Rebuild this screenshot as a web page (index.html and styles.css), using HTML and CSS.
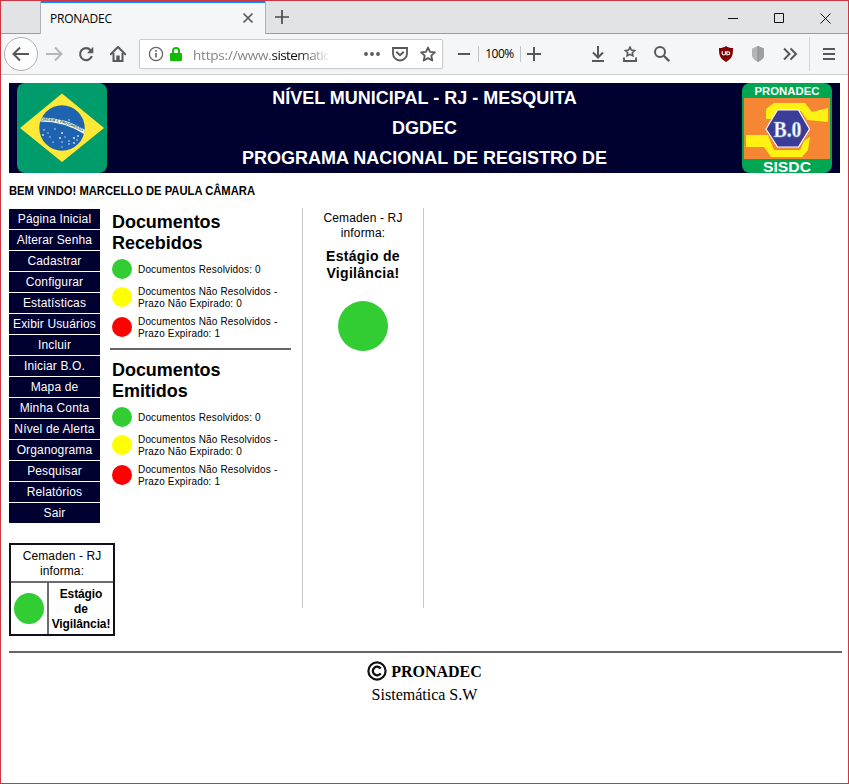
FILE: index.html
```html
<!DOCTYPE html>
<html lang="pt-BR">
<head>
<meta charset="utf-8">
<title>PRONADEC</title>
<link rel="stylesheet" href="styles.css">
</head>
<body>
<div class="window">
  <div class="tabbar">
    <div class="tab"><span class="tab-title">PRONADEC</span>
      <svg class="tab-close" width="12" height="12" viewBox="0 0 12 12"><path d="M1.5 1.5l9 9M10.5 1.5l-9 9" stroke="#58585a" stroke-width="1.7"/></svg>
    </div>
    <svg class="newtab" width="14" height="14" viewBox="0 0 14 14"><path d="M7 0v14M0 7h14" stroke="#4a4a4f" stroke-width="1.7"/></svg>
    <div class="controls">
      <svg width="10" height="11" viewBox="0 0 10 11"><path d="M0 5.5h10" stroke="#111"/></svg>
      <svg width="10" height="10" viewBox="0 0 10 10"><path d="M.5.5h9v9h-9z" fill="none" stroke="#111"/></svg>
      <svg width="11" height="11" viewBox="0 0 11 11"><path d="M.5.5l10 10M10.5.5l-10 10" stroke="#111"/></svg>
    </div>
  </div>
  <div class="toolbar">
    <span class="tool back"><svg width="18" height="16" viewBox="0 0 18 16"><path d="M8 1.5L1.5 8 8 14.5M2 8h15" fill="none" stroke="#58585a" stroke-width="2"/></svg></span>
    <span class="tool"><svg width="18" height="16" viewBox="0 0 18 16"><path d="M10 1.500L16.500 8 10 14.500M16 8H1" fill="none" stroke="#b5b6b8" stroke-width="2"/></svg></span>
    <span class="tool"><svg width="16" height="16" viewBox="0 0 16 16"><path d="M12.600 4.200A6 6 0 1 0 13.800 10" fill="none" stroke="#58585a" stroke-width="2.100"/><path d="M15.300.8v6.400H9z" fill="#58585a"/></svg></span>
    <span class="tool"><svg width="16" height="16" viewBox="0 0 16 16"><path d="M.7 8.200L8 1l7.300 7.200" fill="none" stroke="#58585a" stroke-width="2" stroke-linecap="round" stroke-linejoin="round"/><path d="M3.500 7v8h9V7" fill="none" stroke="#58585a" stroke-width="2"/><path d="M6.300 15v-5.500h3.400V15z" fill="#58585a"/></svg></span>
    <div class="urlbar">
      <svg class="info" width="16" height="16" viewBox="0 0 16 16"><circle cx="8" cy="8" r="6.600" fill="none" stroke="#666" stroke-width="1.300"/><path d="M8 7v4.500M8 4v1.800" stroke="#666" stroke-width="1.700"/></svg>
      <svg class="lock" width="12" height="14" viewBox="0 0 12 14"><path d="M3 7V4a3 3 0 0 1 6 0v3" fill="none" stroke="#12bc00" stroke-width="2"/><rect y="6" width="12" height="8" rx="1" fill="#12bc00"/></svg>
      <span class="url">https://www.<b>sistematic</b></span>
      <svg width="16" height="16" viewBox="0 0 16 16"><g fill="#58585a"><circle cx="2" cy="8" r="1.900"/><circle cx="8" cy="8" r="1.900"/><circle cx="14" cy="8" r="1.900"/></g></svg>
      <svg width="16" height="16" viewBox="0 0 16 16"><path d="M1 2h14v5.500a7 7 0 0 1-14 0z" fill="none" stroke="#58585a" stroke-width="1.800"/><path d="M4.800 6.300L8 9.300l3.200-3" fill="none" stroke="#58585a" stroke-width="1.900" stroke-linecap="round"/></svg>
      <svg width="16" height="16" viewBox="0 0 16 16"><path d="M8 1.500l2 4.400 4.900.5-3.600 3.300 1 4.800L8 12.100l-4.300 2.400 1-4.800L1.100 6.400 6 5.900z" fill="none" stroke="#58585a" stroke-width="1.800" stroke-linejoin="round"/></svg>
    </div>
    <span class="tool zoom-out"><svg width="12" height="14" viewBox="0 0 12 14"><path d="M0 7h12" stroke="#58585a" stroke-width="2"/></svg></span>
    <span class="zoom-level">100%</span>
    <span class="tool zoom-in"><svg width="14" height="14" viewBox="0 0 14 14"><path d="M0 7h14M7 0v14" stroke="#58585a" stroke-width="2"/></svg></span>
    <span class="tool"><svg width="14" height="16" viewBox="0 0 14 16"><path d="M7 0v11M2 6.500l5 5 5-5M1 15h12" fill="none" stroke="#58585a" stroke-width="2"/></svg></span>
    <span class="tool"><svg width="16" height="16" viewBox="0 0 16 16"><path d="M8 1.200l1.400 2.900 3.200.4-2.300 2.200.6 3.200L8 8.400 5.100 9.900l.6-3.200-2.300-2.200 3.200-.4z" fill="none" stroke="#58585a" stroke-width="1.600"/><path d="M2 11.500V15h12v-3.500" fill="none" stroke="#58585a" stroke-width="1.900"/></svg></span>
    <span class="tool search"><svg width="16" height="16" viewBox="0 0 16 16"><circle cx="6" cy="6" r="5" fill="none" stroke="#58585a" stroke-width="2"/><path d="M9.800 9.800l5.400 5.400" stroke="#58585a" stroke-width="2.300"/></svg></span>
    <span class="tool"><svg width="16" height="16" viewBox="0 0 16 16"><path d="M8 0c2 1.500 4 2 7 2.100 0 7-.5 10.400-7 13.900C1.500 12.500 1 9.100 1 2.100 4 2 6 1.500 8 0z" fill="#800000"/><path d="M4.200 5.300v2.500c0 1.600 3.200 1.600 3.200 0V5.300M8.800 5.800h1.300c2.200 0 2.200 3 0 3H8.800z" fill="none" stroke="#fff" stroke-width="1.100"/></svg></span>
    <span class="tool"><svg width="16" height="16" viewBox="0 0 16 16"><path d="M8 0l6 2.500v6.800c0 3-3 5.200-6 6.700-3-1.500-6-3.700-6-6.700V2.500z" fill="#b5b5b5"/><path d="M8 0l6 2.500v6.800c0 3-3 5.200-6 6.700z" fill="#a0a0a0"/><path d="M8 0v16" stroke="#8d8d8d"/></svg></span>
    <span class="tool"><svg width="16" height="16" viewBox="0 0 16 16"><path d="M2 2.500L7.500 8 2 13.500M8.500 2.500L14 8l-5.500 5.500" fill="none" stroke="#58585a" stroke-width="2"/></svg></span>
    <span class="tool menu"><svg width="12" height="14" viewBox="0 0 12 14"><path d="M0 2h12M0 7h12M0 12h12" stroke="#58585a" stroke-width="2"/></svg></span>
  </div>

  <main class="page">
    <header class="banner">
      <svg class="flag" width="90" height="90" viewBox="0 0 90 90">
        <defs><clipPath id="globe"><circle cx="45" cy="45" r="22.700"/></clipPath><path id="motto" d="M22 37.700Q48 37 69 51"/></defs>
        <rect width="90" height="90" rx="8" fill="#009c6b"/>
        <path d="M3 45L45 10.500 87 45 45 79z" fill="#ffe936"/>
        <circle cx="45" cy="45" r="22.700" fill="#1e63b0"/>
        <g clip-path="url(#globe)"><path d="M20 36.500Q48 35.500 70 50.500" fill="none" stroke="#fff" stroke-width="4"/>
        <text class="motto"><textPath href="#motto" startOffset="2">ORDEM E PROGRESSO</textPath></text></g>
        <g fill="#d5e5f7"><circle cx="52" cy="37" r=".8"/><circle cx="27" cy="47" r=".8"/><circle cx="31" cy="50" r=".7"/><circle cx="26" cy="52" r=".9"/><circle cx="33" cy="54" r=".7"/><circle cx="38" cy="46" r=".8"/><circle cx="45" cy="50" r="1"/><circle cx="43" cy="55" r="1"/><circle cx="48" cy="54" r=".7"/><circle cx="45" cy="59" r=".8"/><circle cx="52" cy="58" r=".8"/><circle cx="57" cy="55" r="1"/><circle cx="61" cy="53" r=".9"/><circle cx="57" cy="60" r=".9"/><circle cx="60" cy="57" r=".8"/><circle cx="52" cy="61" r=".8"/><circle cx="45" cy="64" r=".7"/><circle cx="36" cy="59" r=".7"/></g>
      </svg>
      <div class="banner-text"><span class="b1">NÍVEL MUNICIPAL - RJ - MESQUITA</span><span class="b2">DGDEC</span><span class="b3">PROGRAMA NACIONAL DE REGISTRO DE</span></div>
      <svg class="badge" width="90" height="90" viewBox="0 0 90 90">
        <rect width="90" height="90" rx="8" fill="#00a651"/>
        <path d="M2 15h86v61H2z" fill="#f58634"/>
        <path d="M24 26l8-6h31l7 9 16-4v14l-21-2-6-9H37l-6 8h-7z" fill="#fff212"/>
        <path d="M4 52h22l6 15h26l4-9 6-4-2 13-6 7H29l-7-10H4z" fill="#fff212"/>
        <path d="M35.500 27h21L67.500 46l-11 18h-21L24 46z" fill="#3a3c98" stroke="#fff" stroke-width="1.200"/>
        <text class="badge-top" x="45" y="11.500" textLength="65" lengthAdjust="spacingAndGlyphs">PRONADEC</text>
        <text class="badge-mid" x="45.500" y="53.500" textLength="28" lengthAdjust="spacingAndGlyphs">B.0</text>
        <text class="badge-bottom" x="45" y="88.500" textLength="48" lengthAdjust="spacingAndGlyphs">SISDC</text>
      </svg>
    </header>
    <svg class="welcome" width="260" height="16" viewBox="0 0 260 16"><text x="0" y="12" textLength="246" lengthAdjust="spacingAndGlyphs">BEM VINDO! MARCELLO DE PAULA CÂMARA</text></svg>
    <div class="columns">
      <aside class="side">
        <nav><a>Página Inicial</a><a>Alterar Senha</a><a>Cadastrar</a><a>Configurar</a><a>Estatísticas</a><a>Exibir Usuários</a><a>Incluir</a><a>Iniciar B.O.</a><a>Mapa de</a><a>Minha Conta</a><a>Nível de Alerta</a><a>Organograma</a><a>Pesquisar</a><a>Relatórios</a><a>Sair</a></nav>
        <div class="alert-box">
          <div class="alert-head">Cemaden - RJ<br>informa:</div>
          <div class="alert-dot"><i class="dot green"></i></div>
          <div class="alert-stage">Estágio<br>de<br>Vigilância!</div>
        </div>
      </aside>
      <section class="docs">
        <h2>Documentos<br>Recebidos</h2>
        <ul>
          <li><i class="dot green"></i><span>Documentos Resolvidos: 0</span></li>
          <li><i class="dot yellow"></i><span>Documentos Não Resolvidos -<br>Prazo Não Expirado: 0</span></li>
          <li><i class="dot red"></i><span>Documentos Não Resolvidos -<br>Prazo Expirado: 1</span></li>
        </ul>
        <hr>
        <h2>Documentos<br>Emitidos</h2>
        <ul>
          <li><i class="dot green"></i><span>Documentos Resolvidos: 0</span></li>
          <li><i class="dot yellow"></i><span>Documentos Não Resolvidos -<br>Prazo Não Expirado: 0</span></li>
          <li><i class="dot red"></i><span>Documentos Não Resolvidos -<br>Prazo Expirado: 1</span></li>
        </ul>
      </section>
      <section class="stage">
        <p>Cemaden - RJ<br>informa:</p>
        <h3>Estágio de<br>Vigilância!</h3>
        <i class="dot green"></i>
      </section>
    </div>
    <hr class="foot-rule">
    <footer>
      <div class="brand"><svg width="20" height="20" viewBox="0 0 20 20"><circle cx="10" cy="10" r="8.600" fill="none" stroke="#111" stroke-width="2.200"/><path d="M13.700 7.600a4.300 4.300 0 1 0 0 4.800" fill="none" stroke="#111" stroke-width="2.300"/></svg><b>PRONADEC</b></div>
      <div class="company">Sistemática S.W</div>
    </footer>
  </main>
</div>
</body>
</html>
```
FILE: styles.css
```css
* { box-sizing: border-box; }
body { margin: 0; background: #fff; color: #000; font-family: "Liberation Sans", Arial, sans-serif; }
svg { display: block; flex: none; }
.window { width: 849px; height: 784px; border: 1px solid #cf3540; overflow: hidden; }

.tabbar { display: flex; align-items: center; height: 33px; padding-left: 39px; background: #e2e3e5; border-bottom: 1px solid #9b9c9e; }
.tab { display: flex; align-items: center; justify-content: space-between; flex: none; width: 226px; height: 33px; margin-bottom: -1px; padding: 0 11px 0 9px; background: #f5f6f8; border: solid #b1b2b4; border-width: 0 1px; box-shadow: inset 0 2px #0a84ff; }
.tab-title { margin-top: 2px; font: 12px/16px "Open Sans", "Noto Sans", sans-serif; letter-spacing: -.22px; }
.tab-close { margin-top: 1px; }
.newtab { margin-left: 9px; }
.controls { display: flex; align-items: center; gap: 36px; margin: 2px 17px 0 auto; }

.toolbar { display: flex; align-items: center; height: 41px; padding-left: 5px; background: #f5f6f8; border-bottom: 1px solid #cacbcc; }
.tool { display: flex; align-items: center; justify-content: center; flex: none; width: 32px; height: 32px; }
.back { width: 34px; height: 34px; margin: 0 0 0 -2px; border: 1px solid #b1b1b3; border-radius: 50%; background: #fdfdfd; }
.urlbar { display: flex; align-items: center; gap: 12px; flex: none; width: 304px; height: 30px; margin-left: 5px; padding: 0 6px 0 8px; background: #fff; border: 1px solid #cbcbcc; border-radius: 2px; box-shadow: 0 1px 3px #0000000d; }
.lock { margin: 0 0 0 -6px; }
.url { flex: none; width: 138px; margin: 2px 21px 0 -1px; white-space: nowrap; color: #858587; font: 13.5px/20px "Open Sans", "Noto Sans", sans-serif; letter-spacing: -.2px; -webkit-mask-image: linear-gradient(90deg, #000 104px, transparent 137px); mask-image: linear-gradient(90deg, #000 104px, transparent 137px); }
.url b { color: #0c0c0d; font-weight: 400; letter-spacing: -.6px; }
.zoom-out { width: 28px; margin-left: 7px; }
.zoom-level { flex: none; width: 43px; height: 16px; border: solid #c3c4c6; border-width: 0 1px; text-align: center; font: 12px/16px "Open Sans", "Noto Sans", sans-serif; letter-spacing: -.5px; }
.zoom-in { width: 26px; margin-right: 35px; }
.search { margin-right: 32px; }
.menu { width: 39px; height: 34px; margin-left: 3px; border-left: 1px solid #d5d6d8; }

.page { padding: 8px; }
.banner { display: flex; width: 831px; height: 90px; padding: 0 8px; background: #000030; color: #fff; }
.banner-text { display: flex; flex-direction: column; align-items: center; flex: 1; font-size: 18px; font-weight: 700; line-height: 30px; white-space: nowrap; }
.motto { fill: #17613f; font-size: 3.800px; font-weight: 700; }
.badge text { fill: #fff; text-anchor: middle; font-weight: 700; }
.badge .badge-top { font-size: 11.500px; }
.badge .badge-mid { fill: #fff; stroke: #7fa8dc; stroke-width: .6px; font-family: "Liberation Serif", serif; font-size: 23px; }
.badge .badge-bottom { font-size: 15px; }
.welcome { margin-top: 10px; font-size: 12px; font-weight: 700; }

.columns { display: flex; align-items: flex-start; height: 400px; margin-top: 9px; }
.side { flex: none; width: 106px; margin-right: -5px; padding-top: 1px; }
nav { display: flex; flex-direction: column; gap: 1px; width: 91px; }
nav a { height: 20px; background: #000030; color: #fff; font-size: 12px; line-height: 20px; text-align: center; white-space: nowrap; letter-spacing: .15px; }
.alert-box { display: grid; grid-template-columns: 36px 64px; grid-template-rows: 36px 51px; gap: 2px; width: 106px; height: 93px; margin-top: 20px; border: 2px solid #101020; background: #6c6c6c; font-size: 12px; line-height: 15px; text-align: center; }
.alert-box > div { display: flex; align-items: center; justify-content: center; background: #fff; }
.alert-box > .alert-head { grid-column: 1 / 3; padding-top: 2px; letter-spacing: .1px; }
.alert-box > .alert-stage { padding-top: 2px; font-weight: 700; letter-spacing: -.1px; }
.dot { display: block; flex: none; width: 20px; height: 20px; border-radius: 50%; }
.green { background: #32cd32; }
.yellow { background: #ff0; }
.red { background: #f00; }
.alert-dot .dot { width: 30px; height: 31px; }
.docs { flex: none; width: 193px; height: 400px; padding: 4px 11px 0 0; border-right: 1px solid #c9c9c9; }
h2 { margin: 0 0 0 2px; font-size: 18px; line-height: 21px; letter-spacing: -.05px; }
ul { margin: 2px 0 0 2px; padding: 0; list-style: none; }
li { display: flex; align-items: center; gap: 6px; height: 30px; font-size: 10px; line-height: 12px; letter-spacing: .16px; white-space: nowrap; }
li:first-child { height: 26px; }
li span { margin-top: 2px; }
.docs hr { height: 2px; margin: 6px 0 10px; border: 0; background: #666; }
.stage { display: flex; flex-direction: column; align-items: center; flex: none; width: 121px; height: 400px; padding-top: 3px; border-right: 1px solid #c9c9c9; text-align: center; }
.stage p { margin: 0; font-size: 12px; line-height: 15px; letter-spacing: .15px; }
.stage h3 { margin: 7px 0 19px; font-size: 14px; line-height: 17px; letter-spacing: .3px; }
.stage .dot { width: 50px; height: 50px; }
.foot-rule { width: 833px; height: 2px; margin: 43px 0 8px; border: 0; background: #666; }
footer { width: 831px; font: 16px/24px "Liberation Serif", serif; }
.brand { display: flex; align-items: center; justify-content: center; gap: 4px; height: 20px; }
.brand b { margin-top: 2px; }
.company { margin-top: 2px; text-align: center; }
```
